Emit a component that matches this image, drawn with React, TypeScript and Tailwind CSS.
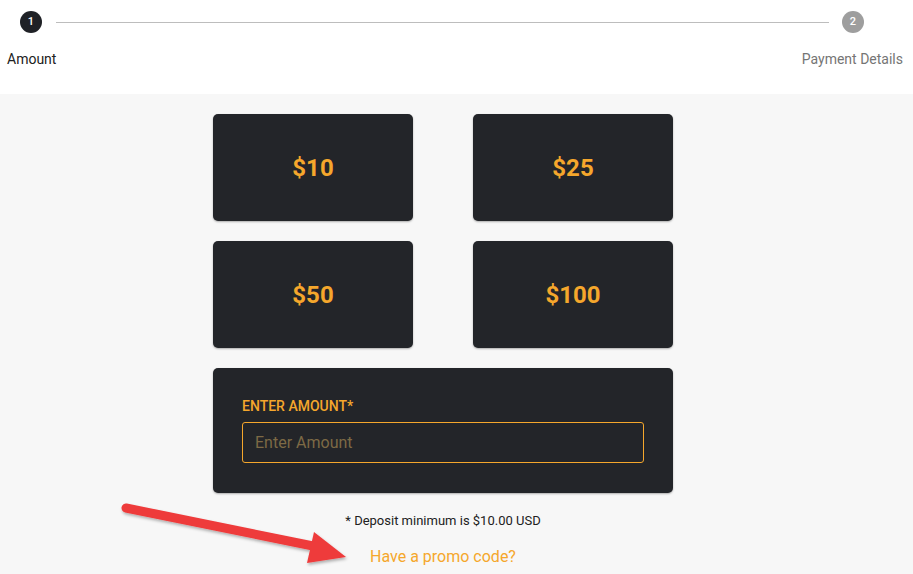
import React from "react";

const amounts = ["$10", "$25", "$50", "$100"];

function Stepper() {
  return (
    <div className="relative h-[94px] bg-white">
      <div className="flex items-center px-5 pt-[11px]">
        <div className="flex h-[22px] w-[22px] items-center justify-center rounded-full bg-[#1f2126] text-[11px] font-medium text-white">
          1
        </div>
        <div className="ml-[14px] mr-[13px] h-px flex-1 bg-[#bdbdbd]" />
        <div className="mr-[29px] flex h-[22px] w-[22px] items-center justify-center rounded-full bg-[#9e9e9e] text-[11px] font-medium text-white">
          2
        </div>
      </div>
      <div className="mt-[16px] flex justify-between pl-[7px] pr-[10px] text-[14px]">
        <span className="text-[#212121]">Amount</span>
        <span className="text-[#757575]">Payment Details</span>
      </div>
    </div>
  );
}

function PromoArrow() {
  return (
    <svg
      className="pointer-events-none absolute left-[118px] top-[499px]"
      width="240"
      height="68"
      viewBox="0 0 240 68"
    >
      <defs>
        <filter id="sh" x="-10%" y="-30%" width="120%" height="160%">
          <feDropShadow dx="1" dy="2" stdDeviation="1.5" floodColor="#000" floodOpacity="0.3" />
        </filter>
      </defs>
      <g filter="url(#sh)" fill="#ee3b3b">
        <path d="M8 9 L200 48" stroke="#ee3b3b" strokeWidth="9" strokeLinecap="round" />
        <path d="M196 33 L228 58 L189 64 Z" />
      </g>
    </svg>
  );
}

export default function App() {
  return (
    <div
      className="relative h-[574px] w-[913px] overflow-hidden bg-[#f7f7f7]"
      style={{ fontFamily: "Roboto, 'Liberation Sans', sans-serif" }}
    >
      <Stepper />
      <div className="pl-[213px] pt-[20px]">
        <div className="grid w-[460px] grid-cols-2 gap-x-[60px] gap-y-[20px]">
          {amounts.map((a) => (
            <button
              key={a}
              type="button"
              className="flex h-[107px] items-center justify-center rounded-[5px] bg-[#232529] text-[24px] font-bold text-[#f5a72c] shadow-[0_1px_2px_rgba(0,0,0,0.3)]"
            >
              {a}
            </button>
          ))}
        </div>
        <div className="mt-[20px] h-[125px] w-[460px] rounded-[5px] bg-[#232529] px-[29px] pt-[29px] shadow-[0_1px_2px_rgba(0,0,0,0.3)]">
          <label className="block text-[14px] font-medium leading-[18px] text-[#f5a72c]">
            ENTER AMOUNT*
          </label>
          <div className="mt-[7px] flex h-[41px] w-[402px] items-center rounded-[3px] border border-[#f5a72c] px-[12px] text-[16px] text-[#7d6a45]">
            Enter Amount
          </div>
        </div>
        <p className="mt-[18px] w-[460px] text-center text-[13px] text-[#212121]">
          * Deposit minimum is $10.00 USD
        </p>
        <p className="mt-[14px] w-[460px] text-center text-[16px] text-[#f5a72c]">
          Have a promo code?
        </p>
      </div>
      <PromoArrow />
    </div>
  );
}
